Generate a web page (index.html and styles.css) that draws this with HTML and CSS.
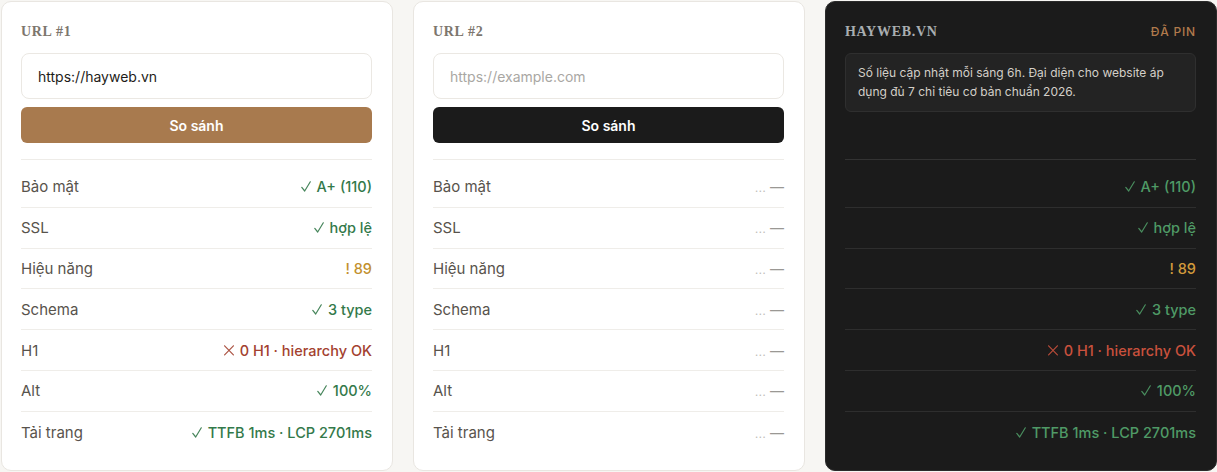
FILE: index.html
```html
<!DOCTYPE html>
<html lang="vi">
<head>
<meta charset="utf-8">
<title>So sánh website</title>
<link rel="stylesheet" href="styles.css">
</head>
<body>
<div class="compare">
  <section class="card">
    <h2 class="card-title">URL #1</h2>
    <div class="form">
      <input class="url-input" type="text" value="https://hayweb.vn">
      <button class="btn btn-brown">So sánh</button>
    </div>
    <ul class="metrics">
      <li><span class="label">Bảo mật</span><span class="val ok"><svg class="mark" viewBox="0 0 10 11"><path d="M0.8 6.4 L3.7 10 L9.3 0.8"/></svg>A+ (110)</span></li>
      <li><span class="label">SSL</span><span class="val ok"><svg class="mark" viewBox="0 0 10 11"><path d="M0.8 6.4 L3.7 10 L9.3 0.8"/></svg>hợp lệ</span></li>
      <li><span class="label">Hiệu năng</span><span class="val warn">! 89</span></li>
      <li><span class="label">Schema</span><span class="val ok"><svg class="mark" viewBox="0 0 10 11"><path d="M0.8 6.4 L3.7 10 L9.3 0.8"/></svg>3 type</span></li>
      <li><span class="label">H1</span><span class="val bad"><svg class="mark" viewBox="0 0 10 11"><path d="M0.6 0.8 L9.4 9.8 M9.4 0.8 L0.6 9.8"/></svg>0 H1 · hierarchy OK</span></li>
      <li><span class="label">Alt</span><span class="val ok"><svg class="mark" viewBox="0 0 10 11"><path d="M0.8 6.4 L3.7 10 L9.3 0.8"/></svg>100%</span></li>
      <li><span class="label">Tải trang</span><span class="val ok"><svg class="mark" viewBox="0 0 10 11"><path d="M0.8 6.4 L3.7 10 L9.3 0.8"/></svg>TTFB 1ms · LCP 2701ms</span></li>
    </ul>
  </section>

  <section class="card">
    <h2 class="card-title">URL #2</h2>
    <div class="form">
      <input class="url-input" type="text" placeholder="https://example.com">
      <button class="btn btn-dark">So sánh</button>
    </div>
    <ul class="metrics">
      <li><span class="label">Bảo mật</span><span class="val empty"><span class="dots">...</span> —</span></li>
      <li><span class="label">SSL</span><span class="val empty"><span class="dots">...</span> —</span></li>
      <li><span class="label">Hiệu năng</span><span class="val empty"><span class="dots">...</span> —</span></li>
      <li><span class="label">Schema</span><span class="val empty"><span class="dots">...</span> —</span></li>
      <li><span class="label">H1</span><span class="val empty"><span class="dots">...</span> —</span></li>
      <li><span class="label">Alt</span><span class="val empty"><span class="dots">...</span> —</span></li>
      <li><span class="label">Tải trang</span><span class="val empty"><span class="dots">...</span> —</span></li>
    </ul>
  </section>

  <section class="card card-dark">
    <div class="card-head">
      <h2 class="card-title">HAYWEB.VN</h2>
      <span class="pin">ĐÃ PIN</span>
    </div>
    <div class="form">
      <p class="note">Số liệu cập nhật mỗi sáng 6h. Đại diện cho website áp dụng đủ 7 chỉ tiêu cơ bản chuẩn 2026.</p>
    </div>
    <ul class="metrics">
      <li><span class="val ok"><svg class="mark" viewBox="0 0 10 11"><path d="M0.8 6.4 L3.7 10 L9.3 0.8"/></svg>A+ (110)</span></li>
      <li><span class="val ok"><svg class="mark" viewBox="0 0 10 11"><path d="M0.8 6.4 L3.7 10 L9.3 0.8"/></svg>hợp lệ</span></li>
      <li><span class="val warn">! 89</span></li>
      <li><span class="val ok"><svg class="mark" viewBox="0 0 10 11"><path d="M0.8 6.4 L3.7 10 L9.3 0.8"/></svg>3 type</span></li>
      <li><span class="val bad"><svg class="mark" viewBox="0 0 10 11"><path d="M0.6 0.8 L9.4 9.8 M9.4 0.8 L0.6 9.8"/></svg>0 H1 · hierarchy OK</span></li>
      <li><span class="val ok"><svg class="mark" viewBox="0 0 10 11"><path d="M0.8 6.4 L3.7 10 L9.3 0.8"/></svg>100%</span></li>
      <li><span class="val ok"><svg class="mark" viewBox="0 0 10 11"><path d="M0.8 6.4 L3.7 10 L9.3 0.8"/></svg>TTFB 1ms · LCP 2701ms</span></li>
    </ul>
  </section>
</div>
</body>
</html>
```

FILE: styles.css
```css
* { box-sizing: border-box; }

html, body {
  margin: 0;
  background: #f7f6f3;
}

body {
  font-family: Inter, "Noto Sans", "DejaVu Sans", sans-serif;
  font-size: 14px;
  color: #2a2723;
}

.compare {
  display: grid;
  grid-template-columns: repeat(3, 392px);
  gap: 20px;
  padding: 1px 0 1px 1px;
}

.card {
  background: #fff;
  border: 1px solid #e9e6e1;
  border-radius: 10px;
  padding: 19px 20px 18px 19px;
  height: 470px;
}

.card-title {
  margin: 0;
  font-family: "Liberation Serif", "DejaVu Serif", serif;
  font-weight: 700;
  font-size: 14px;
  line-height: 22px;
  letter-spacing: 0.7px;
  color: #7d766d;
}

.card-head {
  display: flex;
  justify-content: space-between;
  align-items: center;
}

.pin {
  font-size: 12px;
  font-weight: 500;
  letter-spacing: 0.8px;
  color: #b07a4c;
  line-height: 22px;
}

.form {
  margin-top: 10px;
  height: 90px;
  display: flex;
  flex-direction: column;
  gap: 8px;
}

.url-input {
  height: 46px;
  width: 100%;
  border: 1px solid #ebe8e3;
  border-radius: 8px;
  padding: 0 16px;
  font-family: inherit;
  font-size: 14px;
  color: #1e1c19;
  background: #fff;
  outline: none;
}

.url-input::placeholder { color: #a9a7a3; }

.btn {
  height: 36px;
  border: 0;
  border-radius: 6px;
  font-family: inherit;
  font-size: 14px;
  font-weight: 600;
  color: #fff;
}

.btn-brown { background: #a87a4e; }
.btn-dark { background: #1b1b1b; }

.metrics {
  list-style: none;
  margin: 16px 0 0;
  padding: 7px 0 0;
  border-top: 1px solid #eeece8;
  font-size: 15px;
}

.metrics li {
  display: flex;
  justify-content: space-between;
  align-items: center;
  height: 40.8px;
  border-bottom: 1px solid #efede9;
}

.metrics li:last-child { border-bottom: 0; }

.label { color: #58534c; }

.val {
  margin-left: auto;
  font-weight: 500;
  font-size: 14.5px;
  display: inline-flex;
  align-items: center;
}
.val.ok { color: #33794a; }
.val.warn { color: #c2902e; }
.val.bad { color: #a3412f; }

.mark {
  width: 10px;
  height: 11px;
  margin-right: 6px;
  fill: none;
  stroke: currentColor;
  stroke-width: 1.2;
  stroke-linecap: round;
  stroke-linejoin: round;
  opacity: 0.9;
}

.val.empty {
  color: #9a9894;
  font-weight: 400;
  font-size: 14px;
  display: inline;
}

.dots {
  color: #bdbbb7;
  font-size: 11px;
  letter-spacing: 0.5px;
}

/* dark pinned card */
.card-dark {
  background: #1b1b1b;
  border-color: #2b2b2b;
}

.card-dark .card-title { color: #a9aeb1; }

.note {
  margin: 0;
  background: #232323;
  border: 1px solid #2f2f2f;
  border-radius: 6px;
  padding: 9px 12px 10px;
  font-size: 12px;
  line-height: 19px;
  color: #d3cfc8;
}

.card-dark .metrics { border-top-color: #333; }
.card-dark .metrics li { border-bottom-color: #2e2e2e; }
.card-dark .val.ok { color: #4f9a66; }
.card-dark .val.warn { color: #d49b3c; }
.card-dark .val.bad { color: #c9513d; }
```
